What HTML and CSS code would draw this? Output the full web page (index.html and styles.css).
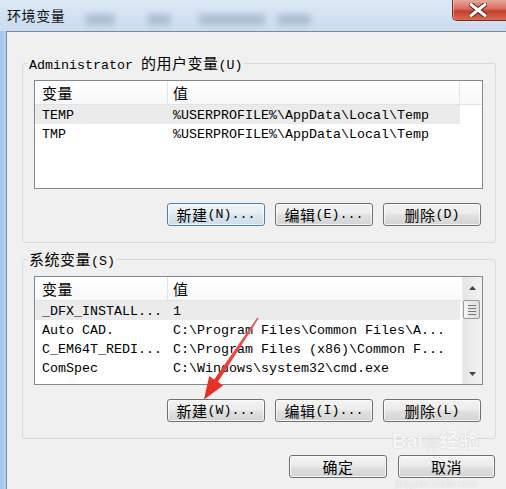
FILE: index.html
```html
<!DOCTYPE html>
<html lang="zh-CN">
<head>
<meta charset="utf-8">
<title>环境变量</title>
<link rel="stylesheet" href="styles.css">
</head>
<body>
<div class="window">
  <div class="titlebar">
    <span class="title">环境变量</span>
    <div class="blobs">
      <span class="blob b1"></span>
      <span class="blob b2"></span>
      <span class="blob b3"></span>
      <span class="blob b4"></span>
    </div>
    <div class="close">
      <svg width="18" height="14" viewBox="0 0 18 14"><path d="M2 1.5 L16 12.5 M16 1.5 L2 12.5" stroke="#5a1a12" stroke-width="5" stroke-linecap="round"/><path d="M2 1.5 L16 12.5 M16 1.5 L2 12.5" stroke="#fff" stroke-width="3" stroke-linecap="round"/></svg>
    </div>
  </div>
  <div class="frame">
    <div class="edge"></div>
    <div class="client">
      <fieldset class="group">
        <legend>Administrator <span class="zh">的用户变量</span>(U)</legend>
        <div class="list">
          <div class="lmain">
            <div class="lhead"><div class="c1 zh">变量</div><div class="c2 zh">值</div><div class="c3"></div></div>
            <div class="row sel"><div class="c1">TEMP</div><div class="c2">%USERPROFILE%\AppData\Local\Temp</div></div>
            <div class="row"><div class="c1">TMP</div><div class="c2">%USERPROFILE%\AppData\Local\Temp</div></div>
          </div>
        </div>
        <div class="btns">
          <div class="btn default"><span class="zh">新建</span>(N)...</div>
          <div class="btn"><span class="zh">编辑</span>(E)...</div>
          <div class="btn"><span class="zh">删除</span>(D)</div>
        </div>
      </fieldset>
      <fieldset class="group g2">
        <legend><span class="zh">系统变量</span>(S)</legend>
        <div class="list">
          <div class="lmain">
            <div class="lhead"><div class="c1 zh">变量</div><div class="c2 zh">值</div></div>
            <div class="row sel"><div class="c1">_DFX_INSTALL...</div><div class="c2">1</div></div>
            <div class="row"><div class="c1">Auto CAD.</div><div class="c2">C:\Program Files\Common Files\A...</div></div>
            <div class="row"><div class="c1">C_EM64T_REDI...</div><div class="c2">C:\Program Files (x86)\Common F...</div></div>
            <div class="row"><div class="c1">ComSpec</div><div class="c2">C:\Windows\system32\cmd.exe</div></div>
          </div>
          <div class="sb">
            <div class="sb-btn"><svg width="7" height="4" viewBox="0 0 7 4"><path d="M0 4 L3.5 0 L7 4Z" fill="#444"/></svg></div>
            <div class="sb-thumb"><span></span><span></span><span></span><span></span></div>
            <div class="sb-space"></div>
            <div class="sb-btn"><svg width="7" height="4" viewBox="0 0 7 4"><path d="M0 0 L3.5 4 L7 0Z" fill="#444"/></svg></div>
          </div>
        </div>
        <div class="btns">
          <div class="btn"><span class="zh">新建</span>(W)...</div>
          <div class="btn"><span class="zh">编辑</span>(I)...</div>
          <div class="btn"><span class="zh">删除</span>(L)</div>
        </div>
      </fieldset>
      <div class="dlg-btns">
        <div class="btn zh">确定</div>
        <div class="btn zh cancel">取消</div>
      </div>
    </div>
  </div>
</div>
<div class="watermark wm-top">Bai<span class="paw">❀</span>经验</div>
<div class="watermark wm-bottom">jingyan.baidu.com</div>
<svg class="arrow" width="506" height="489" viewBox="0 0 506 489">
  <defs><linearGradient id="ar" x1="0" y1="0" x2="0" y2="1"><stop offset="0" stop-color="#f0605a"/><stop offset="1" stop-color="#e2281e"/></linearGradient></defs>
  <polygon points="257.3,317.4 258.7,318.6 218,381.8 223,385.4 204,399.5 209.2,376 214.2,379.4" fill="url(#ar)"/>
</svg>
</body>
</html>
```
FILE: styles.css
```css
* { box-sizing: border-box; }
html, body { margin: 0; padding: 0; }
body {
  width: 506px;
  height: 489px;
  overflow: hidden;
  position: relative;
  background: #f0f0f0;
  font-family: "Liberation Mono", "Noto Sans CJK SC", monospace;
  font-size: 13.33px;
  color: #000;
}
.zh { font-family: "Noto Sans CJK SC", "Liberation Mono", sans-serif; font-size: 15px; letter-spacing: 0.5px; }

.window { width: 506px; height: 489px; display: flex; flex-direction: column; }

.titlebar {
  height: 31px;
  flex: none;
  display: flex;
  align-items: flex-start;
  background: linear-gradient(to bottom, #dce8f5 0%, #cbdcef 100%);
  overflow: hidden;
}
.title {
  font-family: "Noto Sans CJK SC", sans-serif;
  font-size: 14px;
  letter-spacing: 0.6px;
  line-height: 20px;
  padding: 5px 0 0 7px;
  color: #111;
}
.blobs { display: flex; align-items: center; height: 31px; margin-left: 20px; }
.blob { display: block; height: 11px; background: #7f95ad; opacity: 0.45; filter: blur(3px); border-radius: 4px; margin-top: 8px; }
.b1 { width: 30px; }
.b2 { width: 24px; margin-left: 32px; }
.b3 { width: 66px; margin-left: 28px; }
.b4 { width: 34px; margin-left: 12px; }

.close {
  margin-left: auto;
  width: 54px;
  height: 21px;
  border: 1px solid #7c2a20;
  border-top: none;
  border-right: none;
  border-radius: 0 0 0 5px;
  background: linear-gradient(to bottom, #e7a69b 0%, #d76b5c 45%, #c53f2c 55%, #d66a52 100%);
  box-shadow: inset 1px 0 0 rgba(255,255,255,0.4);
  display: flex;
  align-items: center;
  justify-content: center;
  padding-right: 4px;
}

.frame { flex: 1; display: flex; }
.edge { width: 6px; background: linear-gradient(to right, #9fc3ec, #b5d1f0); }
.client {
  flex: 1;
  border-top: 1px solid #7d8a99;
  border-left: 1px solid #7d8a99;
  background: #f0f0f0;
  padding: 23px 0 0 15px;
  display: flex;
  flex-direction: column;
}

.group {
  margin: 0;
  width: 474px;
  min-width: 0;
  padding: 9px 12px 16px 11px;
  border: 1px solid #d5dadf;
  border-radius: 3px;
}
.group legend {
  padding: 0 1px;
  margin-left: -6px;
  height: 16px;
  line-height: 16px;
}
.group legend .zh { line-height: 16px; }
.g2 { margin-top: 8px; }

.list {
  height: 109px;
  border: 1px solid #828790;
  background: #fff;
  display: flex;
}
.lmain { flex: 1; display: flex; flex-direction: column; min-width: 0; }
.lhead {
  height: 24px;
  flex: none;
  display: flex;
  border-bottom: 1px solid #e3e3e3;
  background: linear-gradient(to bottom, #ffffff, #f7f8f9);
  line-height: 23px;
}
.lhead .c1 { width: 133px; padding-left: 7px; border-right: 1px solid #e3e3e3; }
.lhead .c2 { width: 292px; padding-left: 5px; border-right: 1px solid #e3e3e3; }
.lhead .c3 { flex: 1; }
.g2 .lhead .c2 { flex: 1; border-right: none; }

.row {
  width: 425px;
  height: 19px;
  display: flex;
  padding-top: 3px;
  line-height: 16px;
  white-space: nowrap;
}
.row.sel { background: #ebebeb; }
.row .c1 { width: 133px; padding-left: 7px; overflow: hidden; }
.row .c2 { flex: 1; padding-left: 5px; overflow: hidden; }

.sb {
  width: 20px;
  flex: none;
  display: flex;
  flex-direction: column;
  background: linear-gradient(to right, #e6e6e6, #f2f2f2);
  border-left: 1px solid #ececec;
}
.sb-btn { height: 21px; display: flex; align-items: center; justify-content: center; }
.sb-thumb {
  margin: 2px 2px 0 0;
  height: 19px;
  border: 1px solid #9b9b9b;
  border-radius: 2px;
  background: linear-gradient(to right, #f4f4f4, #dcdcdc);
  display: flex;
  flex-direction: column;
  align-items: center;
  justify-content: center;
  gap: 2px;
}
.sb-thumb span { display: block; width: 8px; height: 1px; background: #777; }
.sb-space { flex: 1; }

.btns {
  display: flex;
  justify-content: flex-end;
  gap: 10px;
  margin-top: 14px;
  padding-right: 2px;
}
.btn {
  width: 98px;
  height: 23px;
  border: 1px solid #707070;
  border-radius: 3px;
  background: linear-gradient(to bottom, #f4f4f4 0%, #ececec 45%, #e0e0e0 55%, #d4d4d4 100%);
  box-shadow: inset 0 0 0 1px rgba(255,255,255,0.75);
  display: flex;
  align-items: center;
  justify-content: center;
  line-height: 21px;
  white-space: nowrap;
}
.btn .zh { line-height: 21px; }
.btn.default {
  border-color: #4a82ad;
  background: linear-gradient(to bottom, #f0f6fa 0%, #e5eef4 45%, #d8e5ee 55%, #cddde9 100%);
}

.dlg-btns {
  display: flex;
  justify-content: flex-end;
  gap: 11px;
  margin-top: 16px;
  padding-right: 11px;
}
.dlg-btns .btn { width: 98px; }
.dlg-btns .cancel { width: 97px; }

.watermark {
  position: absolute;
  color: rgba(255,255,255,0.9);
  text-shadow: 0 0 1px rgba(160,160,160,0.7);
  pointer-events: none;
  white-space: nowrap;
}
.wm-top {
  left: 392px;
  top: 430px;
  font-family: "Liberation Sans", "Noto Sans CJK SC", sans-serif;
  font-size: 20px;
  font-weight: bold;
  line-height: 22px;
}
.paw { font-size: 16px; }
.wm-bottom {
  left: 396px;
  top: 478px;
  font-family: "Liberation Sans", sans-serif;
  font-size: 10px;
  line-height: 11px;
}

.arrow { position: absolute; left: 0; top: 0; pointer-events: none; }
```
